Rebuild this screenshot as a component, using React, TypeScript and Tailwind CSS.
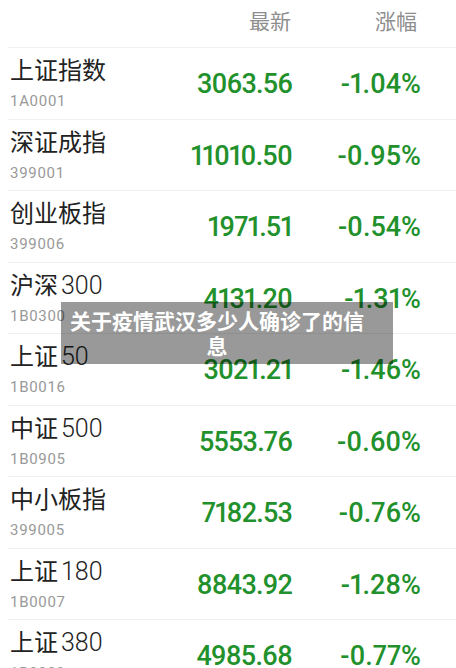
import React from "react";

const rows = [
  { name: "上证指数", num: "", code: "1A0001", price: "3063.56", pct: "-1.04%" },
  { name: "深证成指", num: "", code: "399001", price: "11010.50", pct: "-0.95%" },
  { name: "创业板指", num: "", code: "399006", price: "1971.51", pct: "-0.54%" },
  { name: "沪深", num: "300", code: "1B0300", price: "4131.20", pct: "-1.31%" },
  { name: "上证", num: "50", code: "1B0016", price: "3021.21", pct: "-1.46%" },
  { name: "中证", num: "500", code: "1B0905", price: "5553.76", pct: "-0.60%" },
  { name: "中小板指", num: "", code: "399005", price: "7182.53", pct: "-0.76%" },
  { name: "上证", num: "180", code: "1B0007", price: "8843.92", pct: "-1.28%" },
  { name: "上证", num: "380", code: "1B0009", price: "4985.68", pct: "-0.77%" },
];

const cjk = { fontFamily: 'Roboto, "Noto Sans CJK SC", sans-serif' };
const numFont = { fontFamily: 'Roboto, sans-serif' };

export default function App() {
  return (
    <div className="relative h-[668px] w-[456px] overflow-hidden bg-white" style={cjk}>
      <div className="ml-2 flex h-12 items-center border-b border-[#efefef] pb-[4px]">
        <div className="flex-1" />
        <div className="w-[120px] text-right text-[21px] leading-[28px] text-[#8e8e8e]">最新</div>
        <div className="w-[126px] text-right text-[21px] leading-[28px] text-[#8e8e8e]">涨幅</div>
        <div className="w-[39px]" />
      </div>
      {rows.map((r) => (
        <div key={r.code} className="ml-2 flex h-[71.5px] items-stretch border-b border-[#efefef]">
          <div className="flex flex-1 flex-col pl-[2px] pt-[9px]">
            <div className="text-[24px] leading-[28px] text-[#222]">
              {r.name}
              {r.num && <span className="ml-[3px] text-[25px] font-light">{r.num}</span>}
            </div>
            <div className="mt-[7px] text-[15px] leading-[18px] tracking-[0.7px] text-[#999]">{r.code}</div>
          </div>
          <div className="flex w-[121px] items-center justify-end pt-[2px] text-[27px] font-medium tracking-[-0.8px] text-[#22912c] proportional-nums" style={numFont}>
            {r.price}
          </div>
          <div className="flex w-[129px] items-center justify-end pt-[2px] text-[27px] font-medium tracking-[0px] text-[#22912c] proportional-nums" style={numFont}>
            {r.pct}
          </div>
          <div className="w-[35px]" />
        </div>
      ))}
      <div className="absolute left-[61px] top-[302px] flex h-[62px] w-[332px] items-center bg-black/40">
        <div
          className="ml-[6px] w-[300px] text-center text-[21px] font-bold leading-[25px] text-white"
          style={{ fontFamily: '"Noto Sans CJK SC", sans-serif' }}
        >
          关于疫情武汉多少人确诊了的信息
        </div>
      </div>
    </div>
  );
}
